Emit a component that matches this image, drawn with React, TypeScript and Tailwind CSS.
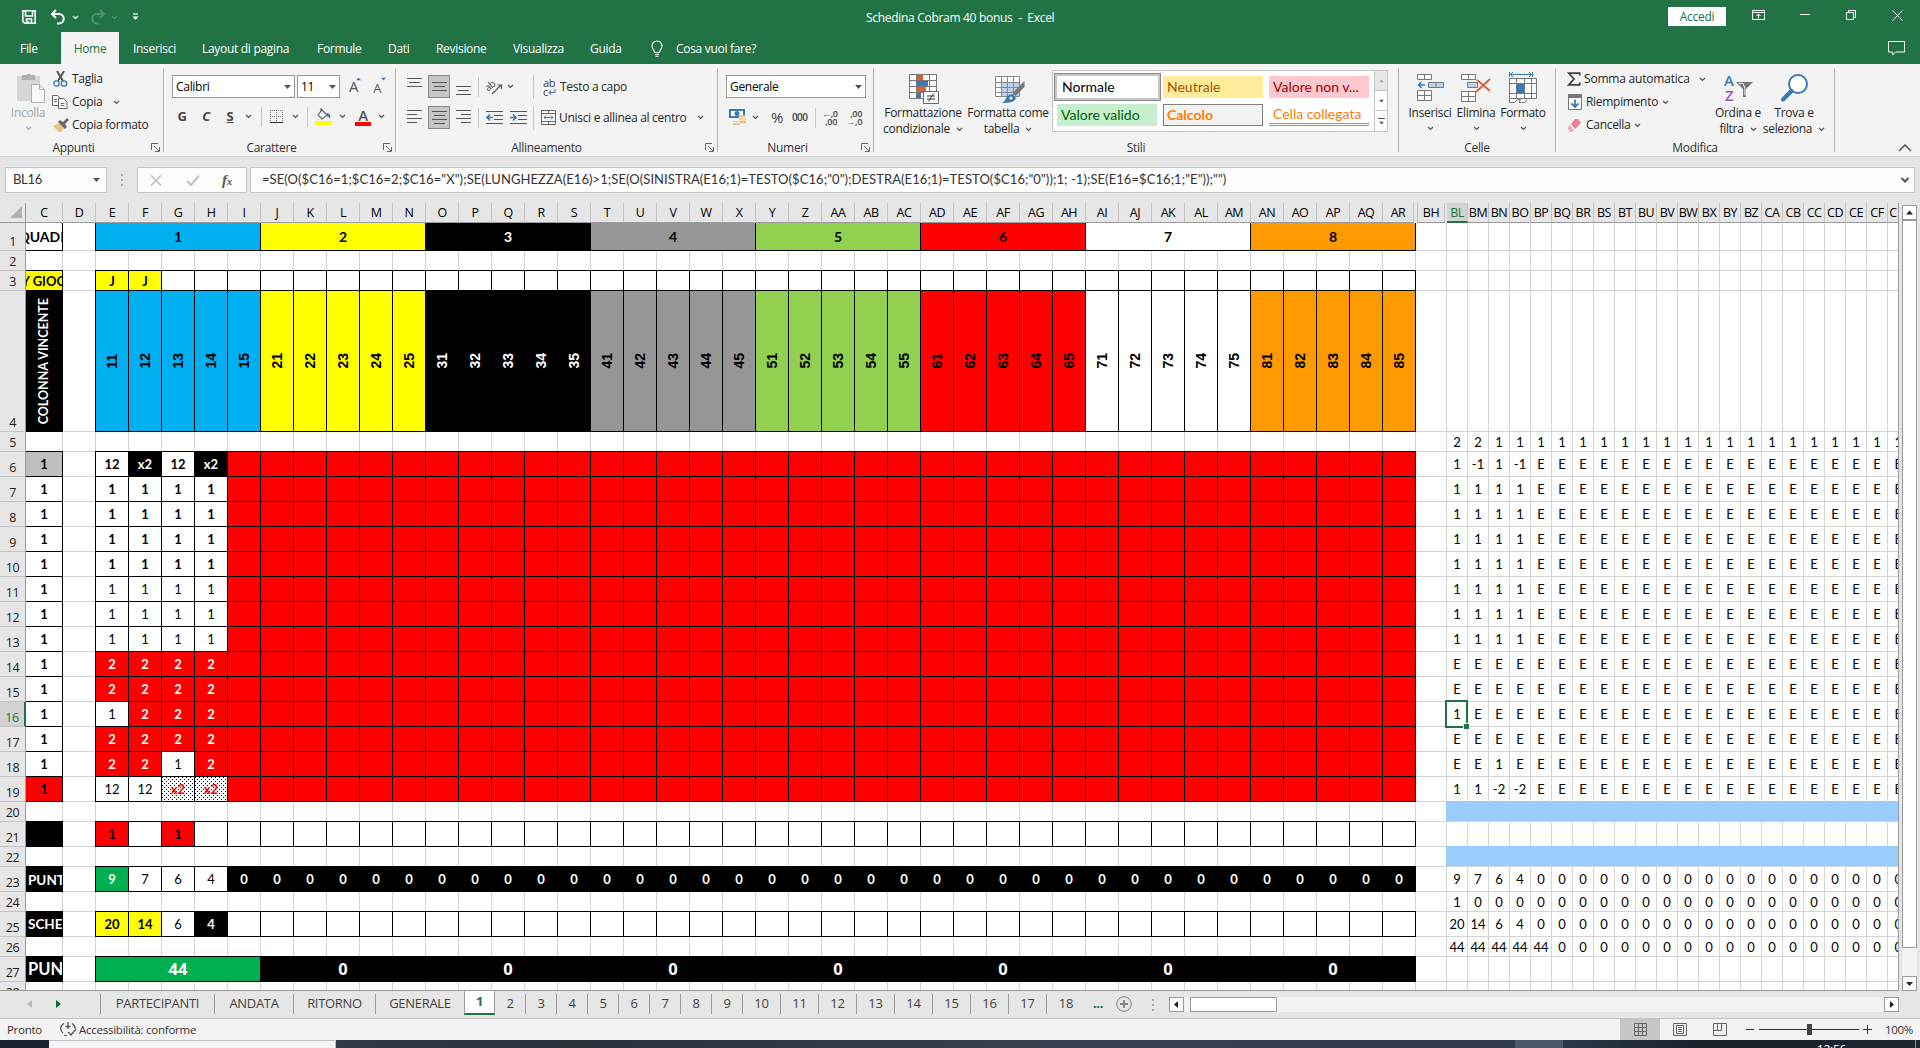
import React from "react";
import clsx from "clsx";

type CellData = {
  text?: string;
  span?: number;
  className?: string;
  boxed?: boolean;
};

type RowData = {
  num: string;
  height: string;
  c?: CellData;
  main: CellData[];
  calc: CellData[];
};

const GRID =
  "grid grid-cols-[26px_37px_33px_repeat(40,33px)_31px_repeat(21,21px)_10px]";

const teams = [
  { fill: "bg-[#00b0f0]" },
  { fill: "bg-[#ffff00]" },
  { fill: "bg-black text-white" },
  { fill: "bg-[#969696]" },
  { fill: "bg-[#92d050]" },
  { fill: "bg-[#ff0000]" },
  { fill: "bg-white" },
  { fill: "bg-[#ff9900]" },
];

// Column names
const colName = (n: number): string =>
  n < 26
    ? String.fromCharCode(65 + n)
    : colName(Math.floor(n / 26) - 1) + String.fromCharCode(65 + (n % 26));
const mainCols = Array.from({ length: 40 }, (_, i) => colName(i + 4));
const calcCols = Array.from({ length: 21 }, (_, i) => colName(i + 63));

// Cell styles
const BOLD = "font-bold";
const RED = "bg-[#ff0000] text-white font-bold";
const REDB = "bg-[#ff0000] font-bold";
const BLACK = "bg-black text-white font-bold";
const YELLOW = "bg-[#ffff00] font-bold";
const GREEN = "bg-[#00b050] text-white font-bold";
const TOTAL = "text-white font-bold text-[16.5px] font-['Open_Sans',sans-serif]";
const DOTS =
  "text-[#ff0000] font-bold bg-white bg-[radial-gradient(circle_at_0.5px_0.5px,#000_0.6px,transparent_0.6px),radial-gradient(circle_at_2.5px_2.5px,#000_0.6px,transparent_0.6px)] bg-[length:4px_4px]";

const box = (text = "", className = ""): CellData => ({ text, className, boxed: true });
const fill = (n: number, cell: CellData): CellData[] => Array.from({ length: n }, () => cell);
const empty = (n: number) => fill(n, {});

const vals = (head: string[], rest: string): CellData[] =>
  Array.from({ length: 22 }, (_, i) => ({ text: head[i] ?? rest }));

const pick = (v: string) => (v === "2" ? box("2", RED) : box(v));
const pool = (head: CellData[]) => [...head, ...fill(36, box("", REDB))];

const one = box("1", BOLD);
const r25 = "h-[25px]";
const r20 = "h-5";
const blue: CellData = { className: "relative -ml-px -mt-px border-[#99ccff] bg-[#99ccff]" };

const rows: RowData[] = [
  {
    num: "1",
    height: "h-7",
    c: box("SQUADRE", "font-bold text-[14px]"),
    main: teams.map((t, i) => ({ text: String(i + 1), span: 5, boxed: true, className: clsx(t.fill, "font-bold text-[14px]") })),
    calc: empty(22),
  },
  { num: "2", height: r20, main: empty(40), calc: empty(22) },
  {
    num: "3",
    height: r20,
    c: box("JOLLY GIOCATI", clsx(YELLOW, "pr-[10px]")),
    main: [box("J", YELLOW), box("J", YELLOW), ...fill(38, box())],
    calc: empty(22),
  },
  {
    num: "4",
    height: "h-[141px]",
    c: box("COLONNA VINCENTE", "bg-black text-white font-bold text-[12.5px] vert"),
    main: teams.flatMap((t, i) =>
      Array.from({ length: 5 }, (_, j) =>
        box(`${i + 1}${j + 1}`, clsx(t.fill, "vert font-bold text-[14px] font-['Liberation_Sans',sans-serif]"))
      )
    ),
    calc: empty(22),
  },
  { num: "5", height: r20, main: empty(40), calc: vals(["2", "2"], "1") },
  {
    num: "6",
    height: r25,
    c: box("1", "bg-[#bfbfbf] font-bold"),
    main: pool([box("12", BOLD), box("x2", BLACK), box("12", BOLD), box("x2", BLACK)]),
    calc: vals(["1", "-1", "1", "-1"], "E"),
  },
  ...["7", "8", "9", "10"].map((num) => ({
    num,
    height: r25,
    c: one,
    main: pool([one, one, one, one]),
    calc: vals(["1", "1", "1", "1"], "E"),
  })),
  ...["11", "12", "13"].map((num) => ({
    num,
    height: r25,
    c: one,
    main: pool(["1", "1", "1", "1"].map(pick)),
    calc: vals(["1", "1", "1", "1"], "E"),
  })),
  { num: "14", height: r25, c: one, main: pool(["2", "2", "2", "2"].map(pick)), calc: vals([], "E") },
  { num: "15", height: r25, c: one, main: pool(["2", "2", "2", "2"].map(pick)), calc: vals([], "E") },
  { num: "16", height: r25, c: one, main: pool(["1", "2", "2", "2"].map(pick)), calc: vals(["1"], "E") },
  { num: "17", height: r25, c: one, main: pool(["2", "2", "2", "2"].map(pick)), calc: vals([], "E") },
  { num: "18", height: r25, c: one, main: pool(["2", "2", "1", "2"].map(pick)), calc: vals(["E", "E", "1"], "E") },
  {
    num: "19",
    height: r25,
    c: box("1", REDB),
    main: pool([box("12"), box("12"), box("x2", DOTS), box("x2", DOTS)]),
    calc: vals(["1", "1", "-2", "-2"], "E"),
  },
  { num: "20", height: r20, main: empty(40), calc: fill(22, blue) },
  {
    num: "21",
    height: r25,
    c: box("", "bg-black"),
    main: [box("1", REDB), box(), box("1", REDB), ...fill(37, box())],
    calc: empty(22),
  },
  { num: "22", height: r20, main: empty(40), calc: fill(22, blue) },
  {
    num: "23",
    height: r25,
    c: box("PUNTI", "bg-black text-white font-bold text-[13.5px] left pt-[3px]"),
    main: [box("9", GREEN), box("7"), box("6"), box("4"), ...fill(36, box("0", BLACK))],
    calc: vals(["9", "7", "6", "4"], "0"),
  },
  { num: "24", height: r20, main: empty(40), calc: vals(["1"], "0") },
  {
    num: "25",
    height: r25,
    c: box("SCHEDINA", "bg-black text-white font-bold text-[13.5px] left"),
    main: [box("20", YELLOW), box("14", YELLOW), box("6"), box("4", BLACK), ...fill(36, box())],
    calc: vals(["20", "14", "6", "4"], "0"),
  },
  { num: "26", height: r20, main: empty(40), calc: vals(["44", "44", "44", "44", "44"], "0") },
  {
    num: "27",
    height: r25,
    c: box("PUNTI", "bg-black text-white font-bold text-[16.5px] left"),
    main: [
      { text: "44", span: 5, boxed: true, className: clsx("bg-[#00b050]", TOTAL) },
      ...fill(7, { text: "0", span: 5, boxed: true, className: clsx("bg-black", TOTAL) }),
    ],
    calc: empty(22),
  },
  { num: "28", height: "h-5", main: empty(40), calc: empty(22) },
];

const Cell = ({ text, span, className = "", boxed }: CellData) => {
  const vertical = className.includes("vert");
  const left = className.includes("left");
  return (
    <div
      className={clsx(
        "flex items-center overflow-hidden whitespace-nowrap leading-none",
        left ? "justify-start pl-[2px]" : "justify-center",
        boxed ? "relative -ml-px -mt-px border border-black" : "border-r border-b border-[#d4d4d4]",
        span === 5 && "col-span-5",
        className
      )}
    >
      {text && (
        <span className={clsx("shrink-0", vertical ? "rotate-180 [writing-mode:vertical-rl]" : "pt-px")}>{text}</span>
      )}
    </div>
  );
};

const HeadCell = ({ text, active, className }: { text: string; active?: boolean; className?: string }) => (
  <div
    className={clsx(
      "flex items-center justify-center overflow-hidden border-r border-[#c3c3c3] pt-0.5 text-[12.5px] tracking-[-0.5px]",
      active ? "border-b-2 border-b-[#217346] bg-[#d2d2d2] text-[#217346]" : "border-b border-b-[#9b9b9b]",
      className
    )}
  >
    {text}
  </div>
);

const Sheet = () => (
  <div className="relative h-[788px] w-[1899px] overflow-hidden border-r border-b border-[#9b9b9b] bg-white font-[Lato,sans-serif] text-[13px] text-black">
    <div className={clsx(GRID, "relative z-20 h-5 bg-[#e6e6e6] font-['Open_Sans',sans-serif]")}>
      <div className="flex items-end justify-end border-r border-b border-[#9b9b9b] pr-[3px] pb-1">
        <svg width="12" height="12">
          <path d="M12 0V12H0Z" fill="#b0b0b0" />
        </svg>
      </div>
      <HeadCell text="C" />
      <HeadCell text="D" />
      {mainCols.map((c) => (
        <HeadCell key={c} text={c} className={c === "AR" ? "mr-0.5" : ""} />
      ))}
      <HeadCell text="BH" className="mr-0.5 ml-px border-l" />
      {calcCols.map((c) => (
        <HeadCell key={c} text={c} active={c === "BL"} />
      ))}
      <HeadCell text="C" className="border-r-0" />
    </div>
    {rows.map((row) => (
      <div key={row.num} className={clsx(GRID, row.height)}>
        <div
          className={clsx(
            "relative z-10 flex items-end justify-center border-b border-b-[#c3c3c3] font-['Open_Sans',sans-serif] text-[12.5px] leading-[16px] tracking-[-0.4px]",
            row.num === "16"
              ? "border-r-2 border-r-[#217346] bg-[#d2d2d2] text-[#217346]"
              : "border-r border-r-[#9b9b9b] bg-[#e6e6e6] text-[#222]"
          )}
        >
          {row.num}
        </div>
        <Cell {...row.c} />
        <Cell />
        {row.main.map((cell, i) => (
          <Cell key={i} {...cell} />
        ))}
        <Cell />
        {row.calc.slice(0, 21).map((cell, i) => (
          <Cell key={i} {...cell} />
        ))}
        <div
          className={clsx(
            "flex items-center justify-end overflow-hidden border-b border-[#d4d4d4] leading-none",
            row.calc[21].className
          )}
        >
          <span className="-mr-1 pt-px">{row.calc[21].text}</span>
        </div>
      </div>
    ))}
    {/* Active cell */}
    <div className="absolute top-[497px] left-[1445px] z-10 h-7 w-[23px] border-2 border-[#217346]">
      <div className="absolute -right-[3px] -bottom-[3px] h-[6px] w-[6px] border-t border-l border-white bg-[#217346]" />
    </div>
  </div>
);

const Chev = ({ className = "", color = "#555" }: { className?: string; color?: string }) => (
  <svg width="7" height="5" viewBox="0 0 7 5" className={clsx("shrink-0", className)}>
    <path d="M1 1l2.5 2.5L6 1" fill="none" stroke={color} strokeWidth="1.2" />
  </svg>
);

const Tri = ({ className = "" }: { className?: string }) => (
  <svg width="7" height="4" viewBox="0 0 7 4" className={clsx("shrink-0", className)}>
    <path d="M0 0H7L3.5 4Z" fill="#555" />
  </svg>
);

const Launcher = () => (
  <svg width="9" height="9" viewBox="0 0 9 9" className="absolute right-[3px] bottom-0" fill="none" stroke="#666">
    <path d="M.5 7V.5H7M3 3l5 5M8.5 4V8.5H4" />
  </svg>
);

const Sep = ({ className = "" }: { className?: string }) => (
  <div className={clsx("w-px shrink-0 bg-[#c8c8c8]", className)} />
);

const Group = ({ label, className, launcher, children }: {
  label: string;
  className: string;
  launcher?: boolean;
  children: React.ReactNode;
}) => (
  <div className={clsx("relative h-[84px] shrink-0 border-r border-[#b4b4b4]", className)}>
    <div className="h-[72px]">{children}</div>
    <div className="text-center leading-4 text-[#333]">{label}</div>
    {launcher && <Launcher />}
  </div>
);

const Lines = ({ widths, y, className = "" }: { widths: number[]; y: number; className?: string }) => (
  <svg width="15" height="17" className={className} stroke="#555">
    {widths.map((w, i) => {
      const x = w < 0 ? 15 + w : w === 15 ? 0 : w % 2 ? (15 - w) / 2 : 0;
      return <path key={i} d={`M${x} ${y + i * 4 + 0.5}h${Math.abs(w)}`} />;
    })}
  </svg>
);

const Indent = ({ out, className }: { out?: boolean; className?: string }) => (
  <svg width="17" height="14" viewBox="0 0 17 14" className={className} fill="none">
    <path d="M0 .5h17M8 4.5h9M8 8.5h9M0 12.5h17" stroke="#555" />
    {out ? (
      <path d="M7 6.5H1M4 3.5L1 6.5l3 3" stroke="#3b78b8" strokeWidth="1.6" />
    ) : (
      <path d="M0 6.5h6M3 3.5l3 3-3 3" stroke="#3b78b8" strokeWidth="1.6" />
    )}
  </svg>
);

const Combo = ({ text, className }: { text: string; className: string }) => (
  <div className={clsx("flex h-[23px] items-center justify-between border border-[#999] bg-white pr-[3px] pl-[3px] text-black", className)}>
    <span>{text}</span>
    <Tri />
  </div>
);

const BigButton = ({ icon, lines, chevInline, className, textClass }: {
  icon: React.ReactNode;
  lines: string[];
  chevInline?: boolean;
  className: string;
  textClass?: string;
}) => (
  <div className={clsx("flex shrink-0 flex-col items-center whitespace-nowrap", className)}>
    <div className="flex h-[37px] items-center">{icon}</div>
    <div className={clsx("leading-4", textClass)}>{lines[0]}</div>
    <div className={clsx("flex h-4 items-center gap-1.5 leading-4", textClass)}>
      {lines[1]}
      <Chev className={chevInline ? "" : "-mt-0.5"} color={textClass ? "#aaa" : "#555"} />
    </div>
  </div>
);

const TitleBar = () => (
  <div className="flex h-[33px] bg-[#217346] text-white">
    <div className="flex w-[866px] pt-[9px]">
      <svg width="16" height="16" viewBox="0 0 16 16" className="ml-[21px]" fill="none" stroke="#fff" strokeWidth="1.6">
        <path d="M1.8 1.8H14.2V14.2H3.6L1.8 12.5ZM4.5 2v5h7V2M5.5 14v-4h5v4M7.5 12v2" />
      </svg>
      <svg width="16" height="16" viewBox="0 0 16 16" className="ml-[13px]" fill="none" stroke="#fff" strokeWidth="2">
        <path d="M6 1L2 5l4 4M2 5h7a4.2 4.2 0 010 9.5H7" />
      </svg>
      <Chev className="ml-[6px] mt-1.5" color="#fff" />
      <svg width="16" height="16" viewBox="0 0 16 16" className="ml-[11px]" fill="none" stroke="#54916f" strokeWidth="2">
        <path d="M10 1l4 4-4 4M14 5H7a4.2 4.2 0 000 9.5h2" />
      </svg>
      <Chev className="ml-[5px] mt-1.5" color="#54916f" />
      <svg width="7" height="8" viewBox="0 0 7 8" className="ml-[14px] mt-1">
        <path d="M1 1h5" stroke="#fff" strokeWidth="1.2" />
        <path d="M.5 3.5h6L3.5 7Z" fill="#fff" />
      </svg>
    </div>
    <div className="w-[802px] whitespace-pre pt-2.5 leading-4 tracking-[-0.3px]">Schedina Cobram 40 bonus  -  Excel</div>
    <div className="mt-[7px] flex h-[19px] w-[58px] items-center justify-center bg-white text-[#217346]">Accedi</div>
    <svg width="13" height="10" viewBox="0 0 13 10" className="ml-[26px] mt-[10px]" fill="none" stroke="#fff">
      <path d="M.5.5h12v9H.5ZM.5 2.5h12M6.5 8.5V4M4.5 6l2-2 2 2" />
    </svg>
    <div className="ml-[35px] mt-[14px] h-px w-[10px] bg-white" />
    <svg width="10" height="10" viewBox="0 0 10 10" className="ml-[36px] mt-[10px]" fill="none" stroke="#fff">
      <path d="M.5 2.5h7v7h-7ZM2.5 2V.5h7v7H8" />
    </svg>
    <svg width="11" height="11" viewBox="0 0 11 11" className="ml-[36px] mt-[10px]" stroke="#fff">
      <path d="M.5.5l10 10M10.5.5l-10 10" />
    </svg>
  </div>
);

const MenuBar = () => (
  <div className="flex h-[31px] items-center bg-[#217346] leading-4 whitespace-nowrap text-white">
    <div className="w-[61px] pl-5">File</div>
    <div className="-mt-px flex h-8 w-[58px] items-center justify-center bg-[#f3f3f3] pt-px text-[#217346]">Home</div>
    <div className="w-[69px] pl-[14px]">Inserisci</div>
    <div className="w-[115px] pl-[14px]">Layout di pagina</div>
    <div className="w-[71px] pl-[14px]">Formule</div>
    <div className="w-[48px] pl-[14px]">Dati</div>
    <div className="w-[77px] pl-[14px]">Revisione</div>
    <div className="w-[77px] pl-[14px]">Visualizza</div>
    <div className="w-[75px] pl-[14px]">Guida</div>
    <svg width="12" height="17" viewBox="0 0 12 17" fill="none" stroke="#fff" strokeWidth="1.1">
      <path d="M3.5 12.5c0-2.5-2.5-3.5-2.5-6.5a5 5 0 0110 0c0 3-2.5 4-2.5 6.5ZM4 14.5h4M4.5 16.3h3" />
    </svg>
    <div className="ml-[13px] grow">Cosa vuoi fare?</div>
    <svg width="17" height="15" viewBox="0 0 17 15" className="mr-[15px]" fill="none" stroke="#fff">
      <path d="M.5.5h16v10.5H7.5L4.5 14V11H.5Z" />
    </svg>
  </div>
);

const StyleCell = ({ text, className }: { text: string; className: string }) => (
  <div className={clsx("flex h-[22px] w-[100px] items-center pb-px pl-1 font-[Lato,sans-serif] text-[14px] tracking-normal whitespace-nowrap", className)}>
    {text}
  </div>
);

const Ribbon = () => (
  <div className="flex h-[93px] border-b border-[#cfcfcf] bg-[#f3f3f3] pt-1 text-[#262626]">
    <Group label="Appunti" className="w-[164px] [&>div:nth-child(2)]:pr-4" launcher>
      <div className="flex">
        <BigButton
          className="ml-1 w-[48px]"
          textClass="text-[#a6a6a6]"
          lines={["Incolla", ""]}
          icon={
            <svg width="28" height="31" viewBox="0 0 28 31" className="mt-0.5 ml-1.5">
              <path d="M0 4h23v25H0Z" fill="#d8d4d8" />
              <path d="M5 8V3h4a3 3 0 015 0h4v5Z" fill="#b3b0b3" />
              <path d="M14.5 12.5h8l5 5v13h-13Z" fill="#fbf8fd" stroke="#b3b0b3" />
              <path d="M22.5 12.5v5h5" fill="none" stroke="#b3b0b3" />
            </svg>
          }
        />
        <div className="grow">
          <div className="flex h-[23px] items-center pb-px">
            <svg width="15" height="16" viewBox="0 0 15 16" className="ml-px mr-[4px]" fill="none">
              <path d="M4 0l6 10M11 0L5 10" stroke="#555" strokeWidth="2" />
              <circle cx="3.5" cy="12.5" r="2.7" stroke="#3b78b8" strokeWidth="1.3" />
              <circle cx="11" cy="12.5" r="2.7" stroke="#3b78b8" strokeWidth="1.3" />
            </svg>
            Taglia
          </div>
          <div className="flex h-[23px] items-center pb-px">
            <svg width="16" height="14" viewBox="0 0 16 14" className="mr-[4px]" fill="#fff" stroke="#666">
              <path d="M.5.5h5l3 3v7h-8Z" />
              <path d="M6.5 3.5h5l3.5 3.5v6.5h-8.5Z" />
              <path d="M2 4.5h3M2 6.5h3M8.5 8.5h4M8.5 10.5h4" stroke="#3b78b8" />
            </svg>
            Copia
            <Chev className="ml-[11px]" />
          </div>
          <div className="flex h-[23px] items-center pb-px">
            <svg width="16" height="14" viewBox="0 0 16 14" className="ml-px mr-[3px]">
              <path d="M0 8l6-3 5 5-3 4H6Z" fill="#eac282" />
              <path d="M5 4l2-2 3 2 4-4 2 2-4 4 2 3-2 2Z" fill="#666" />
            </svg>
            Copia formato
          </div>
        </div>
      </div>
    </Group>

    <Group label="Carattere" className="w-[232px] [&>div:nth-child(2)]:pr-4" launcher>
      <div className="flex h-[30px] items-center pt-[7px]">
        <Combo text="Calibri" className="ml-2 w-[123px]" />
        <Combo text="11" className="ml-0.5 w-[43px]" />
        <div className="relative ml-[9px] text-[15px] text-[#555]">
          A<Tri className="absolute top-0.5 -right-[4px] rotate-180 scale-75 [&_path]:fill-[#3b78b8]" />
        </div>
        <div className="relative ml-[15px] pt-1 text-[13px] text-[#555]">
          A<Tri className="absolute top-0.5 -right-[6px] scale-75 [&_path]:fill-[#3b78b8]" />
        </div>
      </div>
      <div className="mt-2 flex h-[23px] items-center pb-0.5 text-[13px] text-[#444]">
        <b className="ml-[6px] w-6 text-center">G</b>
        <b className="w-6 text-center italic">C</b>
        <b className="w-6 text-center underline">S</b>
        <Chev className="ml-[3px]" />
        <Sep className="ml-[9px] h-5" />
        <svg width="13" height="13" viewBox="0 0 13 13" className="ml-[8px]" fill="none" stroke="#777">
          <path d="M.5 0v12M6.5 0v12M12.5 0v12M0 .5h13M0 6.5h13" strokeDasharray="1 1" />
          <path d="M0 12.5h13" stroke="#333" />
        </svg>
        <Chev className="ml-[9px]" />
        <Sep className="ml-[8px] h-5" />
        <svg width="17" height="17" viewBox="0 0 17 17" className="ml-[7px]" fill="none">
          <path d="M7 2l5 5-5 4-4-4ZM6 4V0" stroke="#666" strokeWidth="1.2" fill="#fff" />
          <path d="M12 5c2 0 4 2 3 6-1-2-2-2-3-3Z" fill="#3b78b8" />
          <path d="M0 13h17v4H0Z" fill="#ffff00" />
        </svg>
        <Chev className="ml-[7px]" />
        <div className="ml-[9px] flex h-[18px] w-[16px] flex-col items-center border-b-4 border-[#ff0000] text-[15px] leading-[14px] font-semibold text-[#555]">A</div>
        <Chev className="ml-[7px]" />
      </div>
    </Group>

    <Group label="Allineamento" className="w-[322px] [&>div:nth-child(2)]:pr-5" launcher>
      <div className="flex h-[30px] items-center pt-[7px]">
        <div className="flex w-8 justify-center pl-1"><Lines widths={[15, 11, 15]} y={0} /></div>
        <div className="flex h-[23px] w-[22px] items-center justify-center border border-[#8a8a8a] bg-[#c6c6c6]">
          <Lines widths={[15, 11, 15]} y={4} />
        </div>
        <div className="flex w-7 justify-center pr-0.5"><Lines widths={[15, 11, 15]} y={8} /></div>
        <Sep className="h-5" />
        <svg width="17" height="16" viewBox="0 0 17 16" className="ml-[7px]" fill="none" stroke="#555">
          <text x="0" y="10" fontSize="10" stroke="none" fill="#444" transform="rotate(-38 5 9)">ab</text>
          <path d="M6 15L15 6M11.5 6H15.5V10" strokeWidth="1.2" />
        </svg>
        <Chev className="ml-[4px]" />
        <Sep className="ml-[19px] h-[24px]" />
        <div className="ml-[9px] w-[14px] text-[11px] leading-[9px] text-[#444]">
          ab<br />c<span className="text-[#3b78b8]">↵</span>
        </div>
        <span className="ml-[3px] whitespace-nowrap">Testo a capo</span>
      </div>
      <div className="mt-2 flex h-[23px] items-center">
        <div className="flex w-8 justify-center pl-1"><Lines widths={[15, 10, 15, 10]} y={1} /></div>
        <div className="flex h-[23px] w-[22px] items-center justify-center border border-[#8a8a8a] bg-[#c6c6c6]">
          <Lines widths={[15, 11, 15, 11]} y={2} />
        </div>
        <div className="flex w-7 justify-center pr-0.5"><Lines widths={[15, -10, 15, -10]} y={1} /></div>
        <Sep className="h-5" />
        <Indent out className="ml-[7px]" />
        <Indent className="ml-[7px]" />
        <Sep className="ml-[6px] h-[24px]" />
        <svg width="15" height="15" viewBox="0 0 15 15" className="ml-[7px]" fill="#fff" stroke="#666">
          <path d="M.5.5h14v14H.5ZM.5 3.5h14M.5 11.5h14M7.5.5v3M7.5 11.5v3" />
          <path d="M3 7.5h9M5 5.5l-2 2 2 2M10 5.5l2 2-2 2" fill="none" stroke="#3b78b8" />
        </svg>
        <span className="ml-[3px] w-[128px] whitespace-nowrap">Unisci e allinea al centro</span>
        <Chev className="ml-[10px]" />
      </div>
    </Group>

    <Group label="Numeri" className="w-[156px] [&>div:nth-child(2)]:pr-4" launcher>
      <div className="h-[30px] pt-[7px]">
        <Combo text="Generale" className="ml-2 w-[140px]" />
      </div>
      <div className="mt-2 flex h-[23px] items-center text-[#444]">
        <svg width="17" height="17" viewBox="0 0 17 17" className="ml-[11px]">
          <path d="M0 0h16v9H0Z" fill="#3b78b8" />
          <path d="M2 2h12v5H2Z" fill="#fff" />
          <circle cx="8" cy="4.5" r="2.5" fill="#3b78b8" />
          <path d="M10 6h7v8h-7ZM4 12h7v4H4Z" fill="#eac282" />
          <path d="M10 8.5h7M10 11h7M4 13.5h7" stroke="#fff" />
        </svg>
        <Chev className="ml-[6px]" />
        <span className="ml-[10px] w-4 text-center text-[15px]">%</span>
        <span className="ml-[7px] w-[16px] text-[10px] font-semibold tracking-[-0.6px]">000</span>
        <Sep className="ml-[7px] h-5" />
        <div className="ml-[6px] w-[15px] text-right text-[9px] leading-[8px] font-semibold tracking-[-0.3px]">
          <span className="text-[#3b78b8]">←</span>,0<br />,00
        </div>
        <div className="ml-[9px] w-[16px] text-right text-[9px] leading-[8px] font-semibold tracking-[-0.3px]">
          ,00<br /><span className="text-[#3b78b8]">→</span>,0
        </div>
      </div>
    </Group>

    <Group label="Stili" className="w-[525px]">
      <div className="flex">
        <BigButton
          className="ml-[9px] w-20"
          chevInline
          lines={["Formattazione", "condizionale"]}
          icon={
            <svg width="30" height="30" viewBox="0 0 30 30" className="mt-1 ml-0.5" fill="none">
              <path d="M.5.5h27v24H.5Z" fill="#fff" />
              <path d="M8 0h6v6H8ZM8 13h9v6H8Z" fill="#d9603b" />
              <path d="M8 7h11v6H8ZM8 19h4v6H8Z" fill="#3b78b8" />
              <path d="M.5.5h27v24H.5ZM.5 6.5h27M.5 12.5h27M.5 18.5h27M7.5.5v24M20.5.5v24" stroke="#777" />
              <path d="M14.5 17.5h15v12h-15Z" fill="#fff" stroke="#666" />
              <path d="M18 22h8M18 25h8M24.5 19.5l-5 8" stroke="#333" />
            </svg>
          }
        />
        <BigButton
          className="ml-[3px] w-[84px]"
          chevInline
          lines={["Formatta come", "tabella"]}
          icon={
            <svg width="30" height="30" viewBox="0 0 30 30" className="mt-1 ml-1" fill="none">
              <path d="M.5 2.5h24v20H.5Z" fill="#fff" />
              <path d="M6.5 8.5h18v14h-18Z" fill="#bdd2ea" />
              <path d="M.5 2.5h24v20H.5ZM.5 8.5h24M.5 13.5h24M.5 18.5h24M6.5 2.5v20M12.5 2.5v20M18.5 2.5v20" stroke="#888" />
              <path d="M29.5 7v6l-9 9-3-3Z" fill="#777" />
              <path d="M17 20l4 4c-1 4-6 5-14 5 4-1 3-8 10-9Z" fill="#3b78b8" />
              <circle cx="16" cy="24" r="1.5" fill="#fff" />
            </svg>
          }
        />
        <div className="ml-[2px] mt-[2px] flex h-[62px] w-[336px] border border-[#c6c6c6] bg-white">
          <div className="grid h-[60px] w-[321px] grid-cols-[106px_106px_100px] content-start pt-[2px] pl-[1px]">
            <div className="h-7 w-[107px] border border-[#888]">
              <div className="h-[26px] border-2 border-[#c6c6c6] pl-[1px]">
                <StyleCell text="Normale" className="text-black" />
              </div>
            </div>
            <StyleCell text="Neutrale" className="mt-[3px] ml-[3px] bg-[#ffeb9c] text-[#9c5700]" />
            <StyleCell text="Valore non v..." className="mt-[3px] ml-[3px] bg-[#ffc7ce] text-[#9c0006]" />
            <StyleCell text="Valore valido" className="mt-[3px] ml-[3px] bg-[#c6efce] text-[#006100]" />
            <StyleCell text="Calcolo" className="mt-[3px] ml-[3px] border border-[#7f7f7f] bg-[#f2f2f2] !pl-[3px] font-bold text-[#fa7d00]" />
            <StyleCell text="Cella collegata" className="mt-[3px] ml-[3px] border-b-[3px] border-double border-[#fa7d00] !pb-0 text-[#fa7d00]" />
          </div>
          <div className="w-[13px] border-l border-[#c6c6c6] [&>div]:flex [&>div]:h-5 [&>div]:items-center [&>div]:justify-center">
            <div className="border-b border-[#c6c6c6] bg-[#e6e6e6]"><Tri className="rotate-180 scale-75 [&_path]:fill-[#aaa]" /></div>
            <div className="border-b border-[#c6c6c6]"><Tri className="scale-75" /></div>
            <div className="flex-col gap-0.5"><div className="h-px w-[7px] bg-[#555]" /><Tri className="scale-75" /></div>
          </div>
        </div>
      </div>
    </Group>

    <Group label="Celle" className="w-[157px]">
      <div className="flex">
        <BigButton
          className="ml-2 w-[46px]"
          lines={["Inserisci", ""]}
          icon={
            <svg width="27" height="28" viewBox="0 0 27 28" className="mt-0.5" fill="#fff" stroke="#777">
              <path d="M.5.5h14v5H.5ZM7.5.5v5M.5 16.5h14v10H.5ZM7.5 16.5v10M.5 21.5h14" />
              <path d="M11.5 8.5h15v5h-15ZM19 8.5v5" fill="#bdd2ea" />
              <path d="M8 11H2M4.5 8L1.5 11l3 3" fill="none" stroke="#3b78b8" strokeWidth="1.6" />
            </svg>
          }
        />
        <BigButton
          className="w-[46px]"
          lines={["Elimina", ""]}
          icon={
            <svg width="30" height="28" viewBox="0 0 30 28" className="mt-0.5" fill="#fff" stroke="#777">
              <path d="M.5.5h14v5H.5ZM7.5.5v5M.5 17.5h14v10H.5ZM7.5 17.5v10M.5 22.5h14" />
              <path d="M6.5 8.5h10v5h-10Z" fill="#bdd2ea" />
              <path d="M16 6l13 11M29 5L15 18" stroke="#d9603b" strokeWidth="1.8" />
            </svg>
          }
        />
        <BigButton
          className="w-[48px]"
          lines={["Formato", ""]}
          icon={
            <svg width="29" height="32" viewBox="0 0 29 32" fill="#fff" stroke="#777">
              <path d="M1 3.5h22M4 1L1.5 3.5 4 6M20 1l2.5 2.5L20 6M.5 1v5M23.5 1v5" stroke="#3b78b8" fill="none" />
              <path d="M.5 7.5h27v20H.5ZM.5 12.5h27M.5 22.5h27M7.5 7.5v20M15.5 7.5v20M22.5 7.5v20" />
              <path d="M8 13h7v9H8Z" fill="#3b78b8" stroke="none" />
              <path d="M.5 28v3.5h5l3-3h3l-1.5 3h6l2-3" />
            </svg>
          }
        />
      </div>
    </Group>

    <Group label="Modifica" className="w-[279px]">
      <div className="flex">
        <div className="w-[150px] whitespace-nowrap [&>div]:flex [&>div]:h-[23px] [&>div]:items-center [&>div]:pb-px">
          <div>
            <svg width="16" height="16" viewBox="0 0 16 16" className="ml-[11px] mr-[3px]" fill="none" stroke="#444" strokeWidth="2">
              <path d="M14.5 4V1.2H2l6 6.8-6 6.8h12.5V12" />
            </svg>
            <span className="w-[104px] tracking-[-0.2px]">Somma automatica</span>
            <Chev className="ml-[11px]" />
          </div>
          <div>
            <svg width="14" height="16" viewBox="0 0 14 16" className="ml-[12px] mr-[4px]" fill="none">
              <path d="M.5.5h13v15H.5Z" fill="#fff" stroke="#777" />
              <path d="M0 0h14v4H0Z" fill="#777" />
              <path d="M7 5.5v7M3.5 9.5L7 13l3.5-3.5" stroke="#3b78b8" strokeWidth="1.8" />
            </svg>
            Riempimento
            <Chev className="ml-1" />
          </div>
          <div>
            <svg width="13" height="13" viewBox="0 0 13 13" className="ml-[12px] mr-[5px]">
              <path d="M7 0h3l3 4-6 6-4-5Z" fill="#e8829a" />
              <path d="M2 6l4 5-2 2H2L0 10V8Z" fill="#f0aebb" />
            </svg>
            Cancella
            <Chev className="ml-1" />
          </div>
        </div>
        <BigButton
          className="ml-[7px] w-[50px]"
          chevInline
          lines={["Ordina e", "filtra"]}
          icon={
            <svg width="30" height="30" viewBox="0 0 30 30" className="mt-1 ml-0.5">
              <text x="0" y="12" fontSize="15" fontWeight="600" fill="#3b78b8">A</text>
              <text x="1" y="27" fontSize="15" fontWeight="600" fill="#9260b4">Z</text>
              <path d="M12 8h17l-7 7v8h-3v-8Z" fill="#777" />
              <path d="M15 9.5h4l2 5v7" fill="none" stroke="#fff" />
            </svg>
          }
        />
        <BigButton
          className="ml-[2px] w-[58px]"
          chevInline
          lines={["Trova e", "seleziona"]}
          icon={
            <svg width="28" height="28" viewBox="0 0 28 28" className="mt-0.5 ml-0.5" fill="none" stroke="#3b78b8">
              <circle cx="17" cy="10" r="9" fill="#fff" strokeWidth="2" />
              <path d="M10.5 17L2 25.5" strokeWidth="4" strokeLinecap="round" />
            </svg>
          }
        />
      </div>
    </Group>
    <svg width="14" height="8" viewBox="0 0 14 8" className="mt-[76px] ml-[63px]" fill="none" stroke="#444" strokeWidth="1.3">
      <path d="M1 7l6-6 6 6" />
    </svg>
  </div>
);

const FormulaBar = () => (
  <div className="flex h-[46px] bg-[#e6e6e6] pt-[10px] font-[Lato,sans-serif] text-[13px] text-[#333] [&>div]:h-[26px]">
    <div className="ml-[5px] flex w-[102px] items-center justify-between border border-[#c6c6c6] bg-[#fdfdfd] pr-[6px] pl-[7px]">
      BL16
      <Tri />
    </div>
    <div className="flex w-[30px] flex-col items-center justify-center gap-[3px]">
      <i className="size-0.5 bg-[#aaa]" />
      <i className="size-0.5 bg-[#aaa]" />
      <i className="size-0.5 bg-[#aaa]" />
    </div>
    <div className="flex w-[110px] items-center border border-[#c6c6c6] bg-[#fdfdfd]">
      <svg width="12" height="11" className="ml-[12px]" stroke="#c0c0c0" strokeWidth="1.6">
        <path d="M1 .5l10 10M11 .5L1 10.5" />
      </svg>
      <svg width="14" height="11" className="ml-[24px]" fill="none" stroke="#c0c0c0" strokeWidth="2">
        <path d="M1 6l4 4L13 .5" />
      </svg>
      <span className="ml-[22px] font-['Liberation_Serif',serif] text-[15px] font-bold text-[#555] italic">
        f<span className="text-[11px]">x</span>
      </span>
    </div>
    <div className="ml-[3px] flex w-[1665px] items-center justify-between border border-[#c6c6c6] bg-[#fdfdfd] pr-[5px] pl-[11px]">
      <span className="tracking-[0.07px] whitespace-nowrap">
        {'=SE(O($C16=1;$C16=2;$C16="X");SE(LUNGHEZZA(E16)>1;SE(O(SINISTRA(E16;1)=TESTO($C16;"0");DESTRA(E16;1)=TESTO($C16;"0"));1; -1);SE(E16=$C16;1;"E"));"")'}
      </span>
      <svg width="8" height="6" fill="none" stroke="#555" strokeWidth="2"><path d="M.5 1L4 4.5 7.5 1" /></svg>
    </div>
  </div>
);

const ScrollBtn = ({ d, className = "" }: { d: string; className?: string }) => (
  <div className={clsx("flex items-center justify-center border border-[#999] bg-white", className)}>
    <svg width="9" height="9" viewBox="0 0 9 9"><path d={d} fill="#222" /></svg>
  </div>
);

const sheetTabs = Array.from({ length: 17 }, (_, i) => String(i + 2));

const TabBar = () => (
  <div className="flex h-[28px] border-b border-[#c3c3c3] bg-[#e6e6e6] text-[13px] tracking-[-0.3px] text-[#444] [&_.tab]:mt-[3px] [&_.tab]:flex [&_.tab]:h-5 [&_.tab]:items-center [&_.tab]:justify-center [&_.tab]:border-r [&_.tab]:border-[#9b9b9b]">
    <div className="tab w-[101px] justify-start!">
      <svg width="5" height="8" className="ml-[27px]"><path d="M5 0v8L0 4Z" fill="#bbb" /></svg>
      <svg width="5" height="8" className="ml-[24px]"><path d="M0 0v8l5-4Z" fill="#0e6b38" /></svg>
    </div>
    <div className="tab w-[114px]">PARTECIPANTI</div>
    <div className="tab w-[79px]">ANDATA</div>
    <div className="tab w-[82px]">RITORNO</div>
    <div className="tab w-[88px] border-r-0!">GENERALE</div>
    <div className="-mt-px flex h-[25px] w-[31px] items-center justify-center border-x border-b-2 border-[#9b9b9b] border-b-[#217346] bg-white font-bold text-[#217346]">1</div>
    {sheetTabs.map((t) => (
      <div key={t} className={clsx("tab", t.length > 1 ? "w-[38px]" : "w-[31px]", t === "18" && "border-r-0!")}>{t}</div>
    ))}
    <div className="w-[26px] text-center leading-[24px] font-bold text-[#0e6b38]">...</div>
    <svg width="16" height="16" viewBox="0 0 16 16" className="mt-[5px] ml-[5px]" fill="none" stroke="#808080">
      <circle cx="8" cy="8" r="7.3" />
      <path d="M8 4v8M4 8h8" strokeWidth="1.8" />
    </svg>
    <div className="ml-5 flex w-0.5 flex-col justify-center gap-[3px]">
      <i className="size-0.5 bg-[#aaa]" />
      <i className="size-0.5 bg-[#aaa]" />
      <i className="size-0.5 bg-[#aaa]" />
    </div>
    <ScrollBtn d="M6 1v7L2 4.5Z" className="mt-1.5 ml-[15px] h-[15px] w-[15px]" />
    <div className="mt-1.5 h-[15px] w-[700px] bg-[#f3f3f3] pl-[6px]">
      <div className="h-[15px] w-[87px] border border-[#999] bg-white" />
    </div>
    <ScrollBtn d="M3 1v7L7 4.5Z" className="mt-1.5 h-[15px] w-[15px]" />
  </div>
);

const StatusBar = () => (
  <div className="flex h-[21px] items-center bg-[#f3f3f3] text-[11.5px] text-[#333]">
    <span className="w-[53px] pl-[7px]">Pronto</span>
    <svg width="17" height="15" viewBox="0 0 17 15" className="ml-[7px]" fill="none" stroke="#555" strokeWidth="1.3">
      <path d="M4 1.5a5.5 5.5 0 00-1 9.5M12 1.5c2 1 3 3 3 5M8 0v7M5.5 4.5h5M4 13l3 1M8 10l3 3 5-6" />
    </svg>
    <span className="ml-0.5 grow tracking-[-0.25px]">Accessibilità: conforme</span>
    <div className="flex h-[21px] w-10 items-center justify-center bg-[#c6c6c6]">
      <svg width="13" height="13" fill="none" stroke="#666"><path d="M.5.5h12v12H.5ZM.5 4.5h12M.5 8.5h12M4.5.5v12M8.5.5v12" /></svg>
    </div>
    <svg width="14" height="13" className="ml-[13px]" fill="none" stroke="#666"><path d="M.5.5h13v12H.5ZM3.5 2.5h7v8h-7ZM5 4.5h4M5 6.5h4M5 8.5h4" /></svg>
    <svg width="14" height="13" className="ml-[26px]" fill="none" stroke="#666"><path d="M.5.5h13v12H.5ZM.5 7.5h8V.5M4.5.5v7" /></svg>
    <div className="ml-[19px] h-px w-2 bg-[#333]" />
    <div className="ml-[5px] flex h-[11px] w-[100px] items-center justify-center bg-[linear-gradient(#333,#333)] bg-[length:100%_1px] bg-center bg-no-repeat">
      <div className="h-[11px] w-[5px] bg-[#444]" />
    </div>
    <svg width="9" height="9" className="ml-[4px]" stroke="#333"><path d="M0 4.5h9M4.5 0v9" /></svg>
    <span className="w-[48px] pl-[13px] tracking-[-0.3px]">100%</span>
  </div>
);

const TaskBar = () => (
  <div className="flex h-2 overflow-hidden bg-[#303a47] text-white">
    <div className="w-[49px] bg-[#17222c]" />
    <div className="w-[287px] border-t border-r border-[#c3c3c3] bg-[#f3f4f7]" />
    <div className="w-[1179px] bg-[linear-gradient(90deg,#303946,#28303a_20%,#37414f_60%,#303a48)]" />
    <div className="w-12 bg-[#4a5868]" />
    <div className="grow bg-[linear-gradient(90deg,#2c3848,#18212a_40%,#1c262e)]">
      <div className="pl-[254px] pt-[2px] text-[12px] leading-4 tracking-[-0.3px]">12:56</div>
    </div>
    <div className="w-[5px] border-l border-[#8a9096] bg-[#1c262e]" />
  </div>
);

export default function App() {
  return (
    <div className="h-[1048px] w-[1920px] overflow-hidden bg-[#e6e6e6] font-['Open_Sans','Noto_Sans',sans-serif] text-[12px] tracking-[-0.3px]">
      <TitleBar />
      <MenuBar />
      <Ribbon />
      <FormulaBar />
      <div className="flex tracking-normal">
        <Sheet />
        <div className="ml-[3px] flex w-[15px] flex-col pt-[2px]">
          <ScrollBtn d="M1 6.5h7L4.5 2.5Z" className="h-[15px]" />
          <div className="h-[728px] border border-[#999] bg-white" />
          <div className="h-[28px] bg-[#f3f3f3]" />
          <ScrollBtn d="M1 3h7L4.5 7Z" className="h-[15px]" />
        </div>
      </div>
      <TabBar />
      <StatusBar />
      <TaskBar />
    </div>
  );
}
